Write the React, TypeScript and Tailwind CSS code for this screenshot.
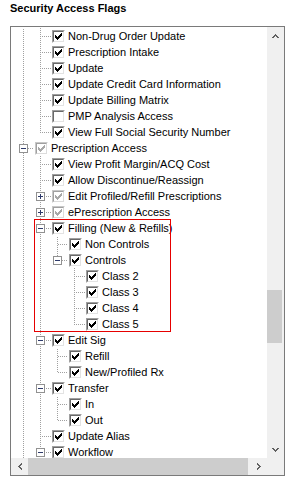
import React from "react";

type Check = "on" | "off" | "gray";
type Exp = "minus" | "plus" | null;
interface Row {
  l: number;
  t: string;
  c: Check;
  e: Exp;
  last: boolean;
  anc: number[];
}

const rows: Row[] = [
  { l: 1, t: "Non-Drug Order Update", c: "on", e: null, last: false, anc: [0] },
  { l: 1, t: "Prescription Intake", c: "on", e: null, last: false, anc: [0] },
  { l: 1, t: "Update", c: "on", e: null, last: false, anc: [0] },
  { l: 1, t: "Update Credit Card Information", c: "on", e: null, last: false, anc: [0] },
  { l: 1, t: "Update Billing Matrix", c: "on", e: null, last: false, anc: [0] },
  { l: 1, t: "PMP Analysis Access", c: "off", e: null, last: false, anc: [0] },
  { l: 1, t: "View Full Social Security Number", c: "on", e: null, last: true, anc: [0] },
  { l: 0, t: "Prescription Access", c: "gray", e: "minus", last: false, anc: [] },
  { l: 1, t: "View Profit Margin/ACQ Cost", c: "on", e: null, last: false, anc: [0] },
  { l: 1, t: "Allow Discontinue/Reassign", c: "on", e: null, last: false, anc: [0] },
  { l: 1, t: "Edit Profiled/Refill Prescriptions", c: "gray", e: "plus", last: false, anc: [0] },
  { l: 1, t: "ePrescription Access", c: "gray", e: "plus", last: false, anc: [0] },
  { l: 1, t: "Filling (New & Refills)", c: "on", e: "minus", last: false, anc: [0] },
  { l: 2, t: "Non Controls", c: "on", e: null, last: false, anc: [0, 1] },
  { l: 2, t: "Controls", c: "on", e: "minus", last: true, anc: [0, 1] },
  { l: 3, t: "Class 2", c: "on", e: null, last: false, anc: [0, 1] },
  { l: 3, t: "Class 3", c: "on", e: null, last: false, anc: [0, 1] },
  { l: 3, t: "Class 4", c: "on", e: null, last: false, anc: [0, 1] },
  { l: 3, t: "Class 5", c: "on", e: null, last: true, anc: [0, 1] },
  { l: 1, t: "Edit Sig", c: "on", e: "minus", last: false, anc: [0] },
  { l: 2, t: "Refill", c: "on", e: null, last: false, anc: [0, 1] },
  { l: 2, t: "New/Profiled Rx", c: "on", e: null, last: true, anc: [0, 1] },
  { l: 1, t: "Transfer", c: "on", e: "minus", last: false, anc: [0] },
  { l: 2, t: "In", c: "on", e: null, last: false, anc: [0, 1] },
  { l: 2, t: "Out", c: "on", e: null, last: true, anc: [0, 1] },
  { l: 1, t: "Update Alias", c: "on", e: null, last: false, anc: [0] },
  { l: 1, t: "Workflow", c: "on", e: "minus", last: false, anc: [0] },
];

const cxOf = (lvl: number) => 12 + 17 * lvl;

function Guides({ row }: { row: Row }) {
  const w = 24 + 17 * row.l;
  const px: React.ReactElement[] = [];
  let k = 0;
  const dot = (x: number, y: number) => {
    if ((x + 1 + y) % 2 === 0) px.push(<rect key={k++} x={x} y={y} width={1} height={1} />);
  };
  const vline = (x: number, y0: number, y1: number) => {
    for (let y = y0; y <= y1; y++) dot(x, y);
  };
  row.anc.forEach((a) => vline(cxOf(a), 0, 15));
  const cx = cxOf(row.l);
  vline(cx, 0, row.last ? 8 : 15);
  for (let x = cx + 1; x <= w - 2; x++) dot(x, 8);
  return (
    <svg width={w} height={16} className="shrink-0" shapeRendering="crispEdges">
      <g fill="#a0a0a0">{px}</g>
      {row.e && (
        <g>
          <rect x={cx - 4 + 0.5} y={4.5} width={8} height={8} fill="#ffffff" stroke="#919191" strokeWidth={1} />
          <rect x={cx - 2} y={8} width={5} height={1} fill="#2e3a6a" />
          {row.e === "plus" && <rect x={cx} y={6} width={1} height={5} fill="#2e3a6a" />}
        </g>
      )}
    </svg>
  );
}

const CHECK = ["......X", ".....XX", "X...XXX", "XX.XXX.", "XXXXX..", ".XXX...", "..X...."];

function CheckMark({ color }: { color: string }) {
  const r: React.ReactElement[] = [];
  CHECK.forEach((line, y) =>
    line.split("").forEach((ch, x) => {
      if (ch === "X") r.push(<rect key={`${x}-${y}`} x={x + 1} y={y + 1} width={1} height={1} />);
    })
  );
  return (
    <svg width={9} height={9} shapeRendering="crispEdges">
      <g fill={color}>{r}</g>
    </svg>
  );
}

function Box({ c }: { c: Check }) {
  if (c === "gray") {
    return (
      <div className="mt-[2px] w-[13px] h-[13px] shrink-0 border border-t-[#c8c8c8] border-l-[#c8c8c8] border-b-white border-r-white">
        <div className="w-[11px] h-[11px] border border-t-[#a0a0a0] border-l-[#a0a0a0] border-b-[#dcdcdc] border-r-[#dcdcdc] bg-white">
          <CheckMark color="#a8a8a8" />
        </div>
      </div>
    );
  }
  return (
    <div className="mt-[2px] w-[13px] h-[13px] shrink-0 border border-t-[#a0a0a0] border-l-[#a0a0a0] border-b-white border-r-white">
      <div className="w-[11px] h-[11px] border border-t-[#696969] border-l-[#696969] border-b-[#e3e3e3] border-r-[#e3e3e3] bg-white">
        {c === "on" && <CheckMark color="#000000" />}
      </div>
    </div>
  );
}

function Arrow({ dir }: { dir: "up" | "down" | "left" | "right" }) {
  const up = ["...X...", "..XXX..", ".XX.XX.", "XX...XX"];
  const r: React.ReactElement[] = [];
  up.forEach((line, y) =>
    line.split("").forEach((ch, x) => {
      if (ch !== "X") return;
      let px = x;
      let py = y;
      if (dir === "down") py = 3 - y;
      if (dir === "left") {
        px = y;
        py = x;
      }
      if (dir === "right") {
        px = 3 - y;
        py = x;
      }
      r.push(<rect key={`${x}-${y}`} x={px} y={py} width={1} height={1} />);
    })
  );
  const vert = dir === "up" || dir === "down";
  return (
    <svg width={vert ? 7 : 4} height={vert ? 4 : 7} shapeRendering="crispEdges">
      <g fill="#606060">{r}</g>
    </svg>
  );
}

export default function App() {
  return (
    <div className="w-[288px] h-[482px] bg-white text-black font-['Liberation_Sans',Arial,sans-serif]">
      <div className="h-[26px] pl-[10px] pt-[2px] text-[11px] leading-[13px] font-bold">Security Access Flags</div>
      <div className="ml-[10px] w-[275px] h-[450px] border border-[#7a7a7a] flex flex-col">
        <div className="flex flex-1 min-h-0">
          <div className="relative flex-1 overflow-hidden pt-[1px]">
            {rows.map((row, i) => (
              <div key={i} className="flex items-start h-[16px]">
                <Guides row={row} />
                <Box c={row.c} />
                <span className="ml-[3px] whitespace-nowrap text-[11px] leading-[16px] text-[#000]">{row.t}</span>
              </div>
            ))}
            <div className="absolute left-[23px] top-[192px] w-[137px] h-[113px] border border-[#e60000]" />
          </div>
          <div className="w-[17px] bg-[#f0f0f0] flex flex-col">
            <div className="h-[17px] flex items-center justify-center">
              <Arrow dir="up" />
            </div>
            <div className="flex-1">
              <div className="mt-[246px] w-[15px] h-[53px] bg-[#cdcdcd]" />
            </div>
            <div className="h-[17px] flex items-center justify-center">
              <Arrow dir="down" />
            </div>
          </div>
        </div>
        <div className="flex h-[17px] bg-[#f0f0f0]">
          <div className="w-[17px] flex items-center justify-center">
            <Arrow dir="left" />
          </div>
          <div className="flex-1 flex items-stretch">
            <div className="w-[220px] bg-[#cdcdcd]" />
          </div>
          <div className="w-[17px] flex items-center justify-center">
            <Arrow dir="right" />
          </div>
          <div className="w-[17px]" />
        </div>
      </div>
    </div>
  );
}
